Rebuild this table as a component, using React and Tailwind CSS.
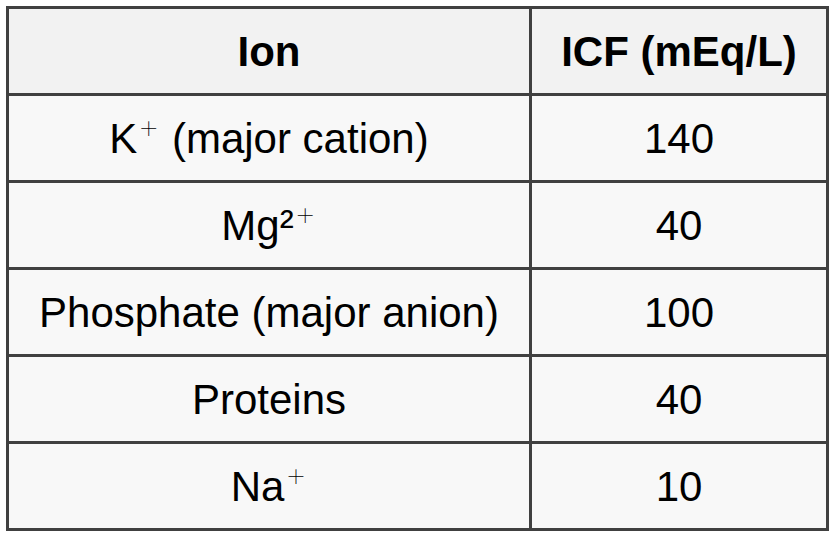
import React from "react";

const Plus = () => (
  <span className="inline-block -translate-y-[14px] font-['Inter',sans-serif] text-[36px] font-thin leading-none">
    +
  </span>
);

const rows = [
  { ion: <>K<Plus /> (major cation)</>, icf: "140" },
  { ion: <>Mg²<Plus /></>, icf: "40" },
  { ion: "Phosphate (major anion)", icf: "100" },
  { ion: "Proteins", icf: "40" },
  { ion: <>Na<Plus /></>, icf: "10" },
];

const Cell = ({ children, head }) => (
  <div
    className={
      "flex items-center justify-center text-[42px] text-black " +
      (head ? "bg-[#f2f2f2] font-bold" : "bg-[#f8f8f8]")
    }
  >
    <span>{children}</span>
  </div>
);

export default function App() {
  return (
    <div className="min-h-screen bg-white p-[6px] font-['Liberation_Sans',Arial,sans-serif]">
      <div className="grid w-[823px] grid-cols-[520px_294px] auto-rows-[84px] gap-[3px] bg-[#404040] p-[3px]">
        <Cell head>Ion</Cell>
        <Cell head>ICF (mEq/L)</Cell>
        {rows.map((r, i) => (
          <React.Fragment key={i}>
            <Cell>{r.ion}</Cell>
            <Cell>{r.icf}</Cell>
          </React.Fragment>
        ))}
      </div>
    </div>
  );
}
